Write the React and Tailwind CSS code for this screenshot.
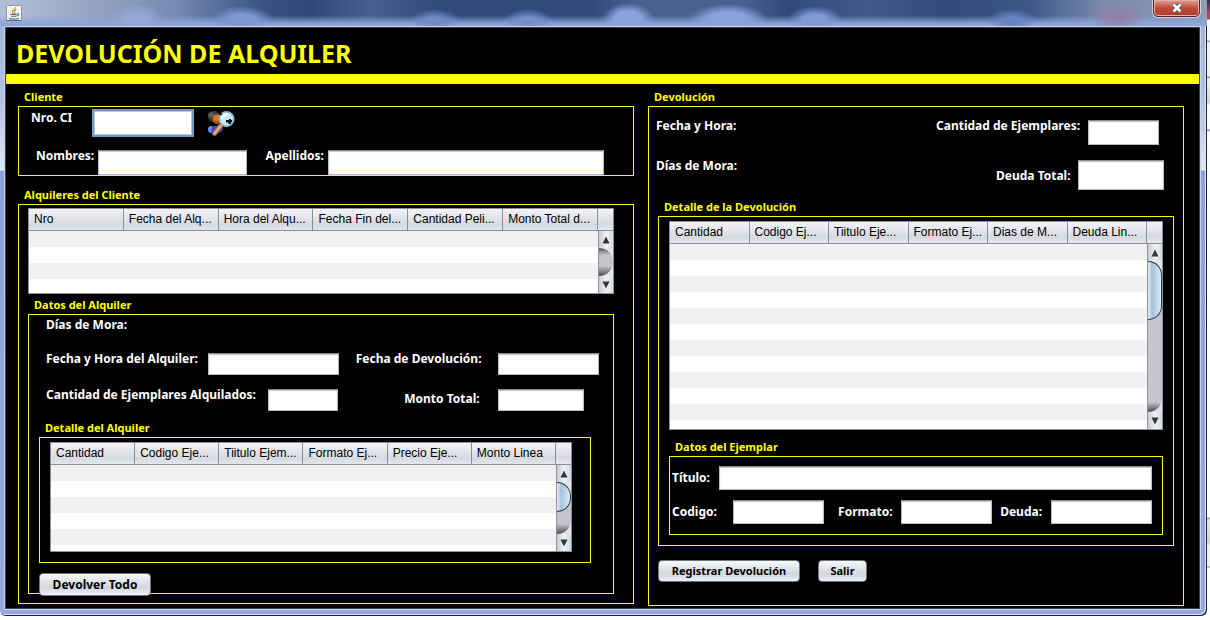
import React from "react";

function JavaIcon() {
  return (
    <svg width="16" height="16" viewBox="0 0 16 16" aria-hidden="true">
      <rect x="0.5" y="0.5" width="15" height="15" rx="1" fill="#f4f4f2" stroke="#8d99a8" />
      <path d="M0.5 15.5h15" stroke="#4f6278" />
      <path d="M9.6 2C10.4 4 6 5 6.4 6.6 6.6 7.6 7.6 8 7.6 8.8M10.4 4.6C8.6 5.4 8 6 8.8 7.2 9 7.8 8.8 8.2 8.4 8.6" fill="none" stroke="#ee7a1b" strokeWidth="1.1" />
      <path d="M4.2 9.4h6.6M5 11.2h5.4M11.2 8.6c1.8-.4 2.2 1.8-.4 2.4M3 13.4c3 .9 7 .9 10-.2" fill="none" stroke="#47749b" strokeWidth="1.1" />
    </svg>
  );
}

function SearchClientIcon() {
  return (
    <svg width="30" height="28" viewBox="0 0 30 28" aria-hidden="true">
      <path d="M2 20c0-2 2-3 5-3s9 0 10 2c0 3-3 5-6 5H5c-2 0-3-2-3-4z" fill="#2f55c8" />
      <path d="M2 20c0-2 2-3 4-3l-1 7c-2 0-3-2-3-4z" fill="#6c8ce8" />
      <circle cx="8" cy="7.500" r="5.800" fill="#3a3a3a" />
      <circle cx="5" cy="6" r="2.800" fill="#5d5d5d" />
      <ellipse cx="11" cy="10" rx="4.600" ry="5" fill="#b9571a" />
      <ellipse cx="10.500" cy="9" rx="3" ry="3" fill="#d8742e" />
      <path d="M14.500 17 8.500 24.500" stroke="#7a4a35" strokeWidth="5.400" strokeLinecap="round" />
      <path d="M14.500 17 8.500 24.500" stroke="#e6a27a" strokeWidth="3.400" strokeLinecap="round" />
      <circle cx="20.500" cy="10" r="7.200" fill="#c6e8f6" stroke="#88b4cc" strokeWidth="1.600" />
      <path d="M16 9c.8-2.500 3-4 6-3.500" fill="none" stroke="#fff" strokeWidth="2" strokeLinecap="round" />
      <path d="M20 11h3v-1h2v1h1v2h-1v2h-2.500v-1.500h-2.500z" fill="#0b0b0b" />
      <path d="M14 4.500h2v1.500h-2z" fill="#0b0b0b" />
    </svg>
  );
}

function Label({ htmlFor, className = "", children }) {
  return (
    <label
      htmlFor={htmlFor}
      className={"block shrink-0 whitespace-nowrap text-[12px] leading-3 font-bold text-white " + className}
    >
      {children}
    </label>
  );
}

function Field({ id, className = "" }) {
  return (
    <input
      id={id}
      type="text"
      className={
        "block min-w-0 rounded-none border border-[#b9b9b9] border-t-[#8a8a8a] bg-white text-[12px] text-black shadow-[inset_0_1px_1px_#c4c4c4] outline-none " +
        className
      }
    />
  );
}

function Group({ title, className = "", boxClass = "", children }) {
  return (
    <section className={className}>
      <h2 className="pl-1.5 text-[11px] leading-[18px] font-bold text-[#ffff00]">{title}</h2>
      <div className={"border border-[#ffff00] " + boxClass}>{children}</div>
    </section>
  );
}

function ScrollButton({ down = false }) {
  return (
    <button
      type="button"
      aria-label={down ? "Bajar" : "Subir"}
      className="flex h-[17px] w-full shrink-0 items-center justify-center bg-linear-to-r from-[#c9ccd2] via-[#f1f2f4] to-[#d3dbe0]"
    >
      <svg width="8" height="8" viewBox="0 0 8 8" aria-hidden="true">
        <path d={down ? "M0.500 0.500h7L4 7.500z" : "M0.500 7.500h7L4 0.500z"} fill="#333539" />
      </svg>
    </button>
  );
}

function ScrollBar({ thumbClass }) {
  return (
    <div className="flex w-full shrink-0 flex-col border-l border-[#8d929b] bg-[#e4e6ea]">
      <ScrollButton />
      <div className="flex-1 overflow-hidden rounded-r-[14px] bg-linear-to-b from-[#55575b] via-[#c4c6cc] via-25% to-[#c4c6cc]">
        <div className="h-full bg-linear-to-t from-[#4c4e52] to-transparent to-[10px]">
          {thumbClass && (
            <div
              className={
                "rounded-r-[14px] border border-l-0 border-[#2b4257] bg-linear-to-r from-[#e3edf5] via-[#a9c3d9] via-30% to-[#dcebf6] " +
                thumbClass
              }
            />
          )}
        </div>
      </div>
      <ScrollButton down />
    </div>
  );
}

function DataTable({ label, columns, rows, className = "", thumbClass }) {
  return (
    <div className={"flex overflow-hidden border border-[#8a8f9c] bg-white " + className}>
      <div className="min-w-0 flex-1">
        <table aria-label={label} className="w-full table-fixed border-separate border-spacing-0">
          <thead>
            <tr className="h-[22px] bg-linear-to-b from-[#f4f4f8] via-[#d6d9df] via-70% to-[#e6eaf0]">
              {columns.map((c) => (
                <th
                  key={c}
                  scope="col"
                  className="border-r border-b border-[#8a8f9c] p-0 pl-[5px] text-left font-['Liberation_Sans',Arial,sans-serif] text-[12px] leading-[21px] font-normal whitespace-nowrap text-black"
                >
                  {c}
                </th>
              ))}
            </tr>
          </thead>
          <tbody>
            {Array.from({ length: rows }, (_, i) => (
              <tr key={i} className="h-4 odd:bg-[#f1f1f1] even:bg-white">
                <td colSpan={columns.length} className="p-0" />
              </tr>
            ))}
          </tbody>
        </table>
      </div>
      <div className="flex w-[15px] shrink-0 flex-col">
        <div className="h-[22px] shrink-0 border-b border-[#8a8f9c] bg-linear-to-b from-[#f4f4f8] via-[#d6d9df] via-70% to-[#e6eaf0]" />
        <div className="flex min-h-0 flex-1">
          <ScrollBar thumbClass={thumbClass} />
        </div>
      </div>
    </div>
  );
}

function ActionButton({ className = "", children }) {
  return (
    <button
      type="button"
      className={
        "rounded-[4px] border border-[#6f757f] bg-linear-to-b from-[#f7f8fa] via-[#d3d6dc] via-65% to-[#eef1f6] font-bold whitespace-nowrap text-black " +
        className
      }
    >
      {children}
    </button>
  );
}

function TitleBar() {
  return (
    <header className="-mr-1.5 -ml-1 flex h-[26px] items-start justify-between bg-[radial-gradient(26px_14px_at_137px_18px,#93a8d4_40%,transparent),radial-gradient(32px_14px_at_242px_20px,#7d98d2_40%,transparent),radial-gradient(26px_12px_at_435px_21px,#6f8cc8_30%,transparent),radial-gradient(26px_12px_at_528px_21px,#7490cc_30%,transparent),radial-gradient(26px_16px_at_628px_19px,#8aa2dc_50%,transparent),radial-gradient(40px_16px_at_728px_20px,#8aa2dc_50%,transparent),radial-gradient(28px_14px_at_815px_20px,#7f99d2_40%,transparent),radial-gradient(26px_12px_at_1012px_21px,#6785c2_30%,transparent),radial-gradient(28px_16px_at_1118px_17px,#927fa8_10%,transparent),linear-gradient(to_bottom,transparent_60%,#8ea4d6_92%),linear-gradient(to_right,#b3bfd6_0px,#8f9fc0_110px,#7388b0_180px,#3c5486_260px,#2f4878_310px,#48608f_370px,#304a7c_440px,#304a7c_590px,#4a6190_640px,#4a6190_740px,#304a7c_790px,#405a8c_870px,#304a7c_950px,#3f588a_1030px,#7789ac_1100px,#8f9db8_1207px)] pt-px pr-[7px] pl-1.5">
      <span className="pt-1">
        <JavaIcon />
      </span>
      <button
        type="button"
        aria-label="Cerrar"
        className="-mt-0.5 flex h-[18px] w-[47px] items-center justify-center rounded-b-[5px] border border-[#5b2028] bg-linear-to-b from-[#dba296] via-[#c14a38] via-50% to-[#a83a2c] shadow-[inset_0_0_0_1px_#e3b2aa,0_0_0_1px_#c9d2e4]"
      >
        <svg width="12" height="10" viewBox="0 0 12 10" aria-hidden="true">
          <path d="M2.500 1.500l7 7M9.500 1.500l-7 7" stroke="#56505a" strokeWidth="4.600" />
          <path d="M2.500 1.500l7 7M9.500 1.500l-7 7" stroke="#fff" strokeWidth="2.800" />
        </svg>
      </button>
    </header>
  );
}

function ClientPanel() {
  return (
    <Group title="Cliente" className="pt-1">
      <div className="flex items-start pt-0.5 pl-3">
        <Label htmlFor="ci" className="w-[61px] pt-[3px]">Nro. CI</Label>
        <input
          id="ci"
          type="text"
          className="block h-7 w-[102px] border-2 border-[#6f9bc8] bg-white px-1 text-[12px] text-black shadow-[inset_0_0_0_1px_#c0c4c8] outline-none"
        />
        <button type="button" aria-label="Buscar cliente" className="ml-3">
          <SearchClientIcon />
        </button>
      </div>
      <div className="mt-[13px] flex items-start pr-[29px] pl-[17px]">
        <Label htmlFor="nombres" className="w-[62px]">Nombres:</Label>
        <Field id="nombres" className="h-[25px] flex-[148]" />
        <Label htmlFor="apellidos" className="ml-[19px] w-[62px]">Apellidos:</Label>
        <Field id="apellidos" className="h-[25px] flex-[277]" />
      </div>
    </Group>
  );
}

function RentalsPanel() {
  return (
    <Group title="Alquileres del Cliente" className="pt-2.5" boxClass="pt-[3px] pr-[19px] pb-[9px] pl-[9px]">
      <DataTable
        label="Alquileres del Cliente"
        className="h-[86px]"
        rows={4}
        columns={["Nro", "Fecha del Alq...", "Hora del Alqu...", "Fecha Fin del...", "Cantidad Peli...", "Monto Total d..."]}
      />
      <Group title="Datos del Alquiler" className="pt-0.5" boxClass="pt-1 pl-2.5">
        <div className="pl-[7px]">
          <Label>Días de Mora:</Label>
          <div className="mt-[22px] flex items-start pr-3.5">
            <Label htmlFor="fecha-alquiler" className="w-[162px]">Fecha y Hora del Alquiler:</Label>
            <Field id="fecha-alquiler" className="h-[22px] flex-[131]" />
            <Label htmlFor="fecha-devolucion" className="ml-[17px] w-[142px]">Fecha de Devolución:</Label>
            <Field id="fecha-devolucion" className="h-[22px] flex-[101]" />
          </div>
          <div className="mt-3.5 flex items-start pr-[29px]">
            <Label htmlFor="cantidad-alquilados" className="w-[222px]">Cantidad de Ejemplares Alquilados:</Label>
            <Field id="cantidad-alquilados" className="h-[22px] flex-[70]" />
            <Label htmlFor="monto-total" className="ml-[66px] w-[94px] pt-1">Monto Total:</Label>
            <Field id="monto-total" className="h-[22px] flex-[86]" />
          </div>
        </div>
        <Group title="Detalle del Alquiler" className="mt-2 mr-[22px]" boxClass="pt-1 pr-[18px] pb-2.5 pl-2.5">
          <DataTable
            label="Detalle del Alquiler"
            className="h-[110px]"
            rows={6}
            thumbClass="h-[30px]"
            columns={["Cantidad", "Codigo Eje...", "Tiitulo Ejem...", "Formato Ej...", "Precio Eje...", "Monto Linea"]}
          />
        </Group>
        <div className="-mb-[3px] pt-2.5">
          <ActionButton className="block h-[23px] w-28 text-[12px]">Devolver Todo</ActionButton>
        </div>
      </Group>
    </Group>
  );
}

function ReturnPanel() {
  return (
    <Group title="Devolución" className="pt-1" boxClass="pt-[13px] pr-[9px] pb-[23px] pl-[9px]">
      <div className="-ml-0.5 flex items-start justify-between pr-[15px]">
        <Label>Fecha y Hora:</Label>
        <div className="flex items-start">
          <Label htmlFor="cantidad-ejemplares" className="w-[152px]">Cantidad de Ejemplares:</Label>
          <Field id="cantidad-ejemplares" className="h-[25px] w-[71px]" />
        </div>
      </div>
      <div className="mt-[15px] -ml-0.5 flex items-start justify-between pr-2.5">
        <Label>Días de Mora:</Label>
        <div className="flex items-start">
          <Label htmlFor="deuda-total" className="w-[82px] pt-2.5">Deuda Total:</Label>
          <Field id="deuda-total" className="h-[30px] w-[86px]" />
        </div>
      </div>
      <Group title="Detalle de la Devolución" className="mt-2" boxClass="pt-1 pr-2.5 pb-2.5 pl-2.5">
        <DataTable
          label="Detalle de la Devolución"
          className="h-[209px]"
          rows={12}
          thumbClass="h-[59px]"
          columns={["Cantidad", "Codigo Ej...", "Tiitulo Eje...", "Formato Ej...", "Dias de M...", "Deuda Lin..."]}
        />
        <Group title="Datos del Ejemplar" className="mt-2" boxClass="space-y-2.5 pt-[9px] pr-2.5 pb-2.5 pl-0.5">
          <div className="flex items-center">
            <Label htmlFor="titulo" className="w-[47px]">Título:</Label>
            <Field id="titulo" className="h-6 flex-1" />
          </div>
          <div className="flex items-center">
            <Label htmlFor="codigo" className="w-[61px]">Codigo:</Label>
            <Field id="codigo" className="h-6 flex-[91]" />
            <Label htmlFor="formato" className="ml-3.5 w-[63px]">Formato:</Label>
            <Field id="formato" className="h-6 flex-[91]" />
            <Label htmlFor="deuda" className="ml-2 w-[51px]">Deuda:</Label>
            <Field id="deuda" className="h-6 flex-[101]" />
          </div>
        </Group>
      </Group>
      <div className="mt-3.5 flex gap-[18px]">
        <ActionButton className="h-[22px] w-[142px] text-[11px]">Registrar Devolución</ActionButton>
        <ActionButton className="h-[22px] w-[49px] text-[11px]">Salir</ActionButton>
      </div>
    </Group>
  );
}

export default function App() {
  return (
    <div className="flex min-h-screen w-full items-start bg-white font-['Noto_Sans',Tahoma,sans-serif]">
      <div className="min-w-0 flex-1 overflow-hidden rounded-b-[6px] bg-[linear-gradient(to_bottom,#9fb0d6_0px,#b4c2e2_100px,#dfe6f3_170px,#8ba2da_171px,#93a9de_616px)] pr-1.5 pb-1.5 pl-1 shadow-[inset_-1px_-1px_0_#1d2430,inset_-2px_-2px_0_#dbe6f5]">
        <TitleBar />
        <div className="border border-[#c9d5ea]">
          <main className="border border-[#3a4252] bg-black">
            <h1 className="h-[46px] pl-2.5 text-[25px] leading-[50px] font-bold text-[#ffff00]">DEVOLUCIÓN DE ALQUILER</h1>
            <div className="h-2.5 bg-[#ffff00]" />
            <div className="grid grid-cols-[minmax(0,616fr)_minmax(0,536fr)] items-start gap-x-3.5 pr-[15px] pb-0.5 pl-3">
              <div>
                <ClientPanel />
                <RentalsPanel />
              </div>
              <ReturnPanel />
            </div>
          </main>
        </div>
      </div>
      <div className="h-[616px] w-[3px] shrink-0 bg-[linear-gradient(to_bottom,#26304a_0px,#b04a58_14px,#b04a58_19px,#f4f6fa_20px,#f4f6fa_40px,#7f9cc0_41px,#f0f0f0_43px,#f0f0f0_76px,#8d8d8d_77px,#f0f0f0_79px,#d4d4d4_103px,#ffffff_105px,#ffffff_129px,#6f93b5_130px,#ffffff_132px,#ffffff_517px,#9a9a9a_518px,#e4e4e4_520px,#d0d0d0_543px,#f0f0f0_545px,#f0f0f0_566px,#8d8d8d_567px,#ffffff_568px)]" />
    </div>
  );
}
